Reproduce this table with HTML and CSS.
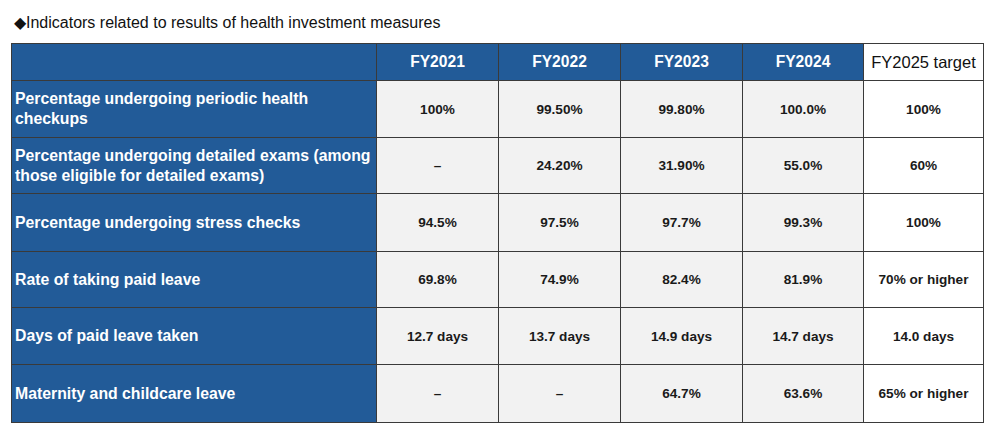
FILE: index.html
```html
<!DOCTYPE html>
<html>
<head>
<meta charset="utf-8">
<link rel="stylesheet" href="styles.css">
</head>
<body>
<div class="page">
  <p class="title">◆Indicators related to results of health investment measures</p>
  <table class="grid">
    <colgroup>
      <col class="c-label"><col class="c-yr"><col class="c-yr"><col class="c-yr"><col class="c-yr4"><col class="c-tgt">
    </colgroup>
    <thead>
      <tr class="r-head">
        <th class="h-blank"></th>
        <th class="h-yr">FY2021</th>
        <th class="h-yr">FY2022</th>
        <th class="h-yr">FY2023</th>
        <th class="h-yr">FY2024</th>
        <th class="h-tgt">FY2025 target</th>
      </tr>
    </thead>
    <tbody>
      <tr class="r1">
        <th class="lbl">Percentage undergoing periodic health checkups</th>
        <td>100%</td><td>99.50%</td><td>99.80%</td><td>100.0%</td><td class="tgt">100%</td>
      </tr>
      <tr class="r2">
        <th class="lbl">Percentage undergoing detailed exams (among those eligible for detailed exams)</th>
        <td>–</td><td>24.20%</td><td>31.90%</td><td>55.0%</td><td class="tgt">60%</td>
      </tr>
      <tr class="r3">
        <th class="lbl">Percentage undergoing stress checks</th>
        <td>94.5%</td><td>97.5%</td><td>97.7%</td><td>99.3%</td><td class="tgt">100%</td>
      </tr>
      <tr class="r4">
        <th class="lbl">Rate of taking paid leave</th>
        <td>69.8%</td><td>74.9%</td><td>82.4%</td><td>81.9%</td><td class="tgt">70% or higher</td>
      </tr>
      <tr class="r5">
        <th class="lbl">Days of paid leave taken</th>
        <td>12.7 days</td><td>13.7 days</td><td>14.9 days</td><td>14.7 days</td><td class="tgt">14.0 days</td>
      </tr>
      <tr class="r6">
        <th class="lbl">Maternity and childcare leave</th>
        <td>–</td><td>–</td><td>64.7%</td><td>63.6%</td><td class="tgt">65% or higher</td>
      </tr>
    </tbody>
  </table>
</div>
</body>
</html>
```
FILE: styles.css
```css
html, body {
  margin: 0;
  padding: 0;
  background: #ffffff;
}
.page {
  padding: 14px 0 0 11px;
  font-family: "Liberation Sans", Arial, sans-serif;
  color: #111;
}
.title {
  margin: 0 0 11px 3px;
  font-size: 16px;
  line-height: 18px;
  color: #111;
}
.grid {
  border-collapse: collapse;
  table-layout: fixed;
  width: 972px;
}
.c-label { width: 365px; }
.c-yr { width: 122px; }
.c-yr4 { width: 121px; }
.c-tgt { width: 120px; }
.grid th, .grid td {
  border: 1px solid #3a3a3a;
  padding: 0;
  text-align: center;
  vertical-align: middle;
}
.r-head th { height: 36px; }
.h-blank, .h-yr {
  background: #225b98;
  border-color: #1c2a3c;
}
.h-yr {
  color: #fff;
  font-weight: bold;
  font-size: 15.6px;
}
.h-tgt {
  background: #fff;
  color: #111;
  font-weight: normal;
  font-size: 16.5px;
}
.lbl {
  background: #225b98;
  border-color: #1c2a3c;
  color: #fff;
  font-weight: bold;
  font-size: 15.8px;
  line-height: 20px;
  text-align: left !important;
  padding: 0 0 0 3px !important;
}
.grid td {
  background: #f2f2f2;
  font-weight: bold;
  font-size: 13.6px;
  color: #1a1a1a;
}
.grid td.tgt {
  background: #fff;
}
.r1 > * { height: 56px; }
.r2 > * { height: 55px; }
.r3 > * { height: 57px; }
.r4 > * { height: 55px; }
.r5 > * { height: 56px; }
.r6 > * { height: 57px; }
```
